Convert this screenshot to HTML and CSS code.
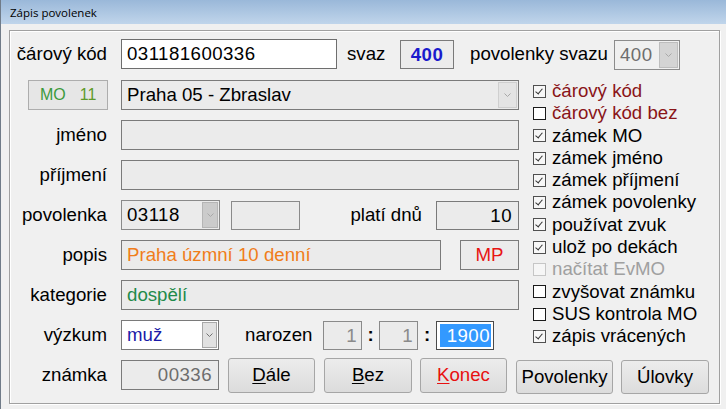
FILE: index.html
```html
<!DOCTYPE html>
<html lang="cs">
<head>
<meta charset="utf-8">
<title>Zápis povolenek</title>
<link rel="stylesheet" href="styles.css">
</head>
<body>
<div class="window">
  <div class="titlebar">Zápis povolenek</div>
  <div class="client">
    <div class="group">
      <div class="row1">
        <span class="label">čárový kód</span>
        <div class="field white code num">031181600336</div>
        <span class="svaz-label">svaz</span>
        <div class="field svaz num">400</div>
        <span class="pv-label">povolenky svazu</span>
        <div class="combo pv">
          <span class="val grey num">400</span>
          <span class="btn"><svg width="7" height="4" viewBox="0 0 7 4"><path d="M0.5 0.5 L3.5 3.5 L6.5 0.5" stroke="#a8a8a8" fill="none"/></svg></span>
        </div>
      </div>

      <div class="middle">
        <div class="form">
          <div class="mo-cell"><div class="mo"><span class="mo-a">MO</span><span class="mo-b">11</span></div></div>
          <div class="combo praha">
            <span class="val">Praha 05 - Zbraslav</span>
            <span class="btn"><svg width="7" height="4" viewBox="0 0 7 4"><path d="M0.5 0.5 L3.5 3.5 L6.5 0.5" stroke="#a8a8a8" fill="none"/></svg></span>
          </div>

          <span class="label">jméno</span>
          <div class="field dis"></div>

          <span class="label">příjmení</span>
          <div class="field dis"></div>

          <span class="label">povolenka</span>
          <div class="line">
            <div class="combo pl">
              <span class="val num">03118</span>
              <span class="btn"><svg width="7" height="4" viewBox="0 0 7 4"><path d="M0.5 0.5 L3.5 3.5 L6.5 0.5" stroke="#a8a8a8" fill="none"/></svg></span>
            </div>
            <div class="field dis small2"></div>
            <span class="spacer"></span>
            <span class="plati">platí dnů</span>
            <div class="field dis days num">10</div>
          </div>

          <span class="label">popis</span>
          <div class="line">
            <div class="field dis popis">Praha úzmní 10 denní</div>
            <div class="field dis mp">MP</div>
          </div>

          <span class="label">kategorie</span>
          <div class="field dis kat">dospělí</div>

          <span class="label">výzkum</span>
          <div class="line">
            <div class="combo vy">
              <span class="val blue">muž</span>
              <span class="btn"><svg width="7" height="4" viewBox="0 0 7 4"><path d="M0.5 0.5 L3.5 3.5 L6.5 0.5" stroke="#707070" fill="none"/></svg></span>
            </div>
            <span class="narozen">narozen</span>
            <div class="field dis day num">1</div>
            <span class="colon c1">:</span>
            <div class="field dis day num">1</div>
            <span class="colon c2">:</span>
            <div class="field year num"><span class="sel">1900</span></div>
          </div>
        </div>

        <ul class="checks">
          <li class="red"><span class="cb on"></span>čárový kód</li>
          <li class="red"><span class="cb off"></span>čárový kód bez</li>
          <li><span class="cb on"></span>zámek MO</li>
          <li><span class="cb on"></span>zámek jméno</li>
          <li><span class="cb on"></span>zámek příjmení</li>
          <li><span class="cb on"></span>zámek povolenky</li>
          <li><span class="cb on"></span>používat zvuk</li>
          <li><span class="cb on"></span>ulož po dekách</li>
          <li class="disabled"><span class="cb dis"></span>načítat EvMO</li>
          <li><span class="cb off"></span>zvyšovat známku</li>
          <li><span class="cb off"></span>SUS kontrola MO</li>
          <li><span class="cb on"></span>zápis vrácených</li>
        </ul>
      </div>

      <div class="bottom">
        <span class="label">známka</span>
        <div class="field dis znamka num">00336</div>
        <button class="b b-dale"><u>D</u>ále</button>
        <button class="b b-bez"><u>B</u>ez</button>
        <button class="b b-konec"><u>K</u>onec</button>
        <button class="b b-pov">Povolenky</button>
        <button class="b b-ul">Úlovky</button>
      </div>
    </div>
  </div>
</div>
</body>
</html>
```

FILE: styles.css
```css
* { box-sizing: border-box; }
html, body { margin: 0; padding: 0; }
body {
  width: 726px;
  height: 409px;
  overflow: hidden;
  background: #f0f0f0;
  font-family: "Liberation Sans", Arial, sans-serif;
  font-size: 18.67px;
  color: #000;
}
.window {
  height: 409px;
  border-left: 1px solid #707b88;
  display: flex;
  flex-direction: column;
}
.titlebar {
  height: 24px;
  flex: none;
  background: linear-gradient(#9ab8d9, #c0d5eb);
  font-family: "Open Sans", "Noto Sans", sans-serif;
  font-size: 11.5px;
  line-height: 25px;
  padding-left: 9px;
  color: #000;
}
.client {
  flex: 1;
  background: #f0f0f0;
  padding: 6px 0 0 8px;
}
.group {
  width: 711px;
  height: 374px;
  border: 1px solid #a0a0a0;
  box-shadow: inset 1px 1px 0 #fff, 1px 1px 0 #fff;
  padding-top: 8px;
}

/* generic */
.label {
  width: 98px;
  padding-right: 1px;
  text-align: right;
  white-space: nowrap;
  line-height: 30px;
}
.field {
  height: 30px;
  border: 1px solid #7a7a7a;
  background: #ebebeb;
  line-height: 28px;
  padding: 0 5px;
  white-space: nowrap;
  overflow: hidden;
}
.field.white { background: #fff; }
.num { letter-spacing: 0.45px; }

.combo {
  height: 30px;
  border: 1px solid #7a7a7a;
  background: #ebebeb;
  display: flex;
  align-items: stretch;
  padding: 1px;
}
.combo .val {
  flex: 1;
  line-height: 26px;
  padding-left: 4px;
  white-space: nowrap;
  overflow: hidden;
}
.combo .btn {
  width: 17px;
  flex: none;
  display: flex;
  align-items: center;
  justify-content: center;
  background: #d6d6d6;
  border: 1px solid #c2c2c2;
}

/* row 1 */
.row1 {
  display: flex;
  align-items: center;
  height: 30px;
}
.row1 .label { margin-right: 13px; }
.code { width: 216px; border-color: #6e6e6e; }
.svaz-label { width: 63px; padding-left: 10px; }
.svaz {
  width: 54px;
  height: 29px;
  background: #ececec;
  text-align: center;
  color: #1a1acc;
  font-weight: bold;
  line-height: 27px;
}
.pv-label { width: 160px; padding-left: 16px; white-space: nowrap; }
.pv { width: 66px; margin-top: 2px; border-color: #8c8c8c; background: #f0f0f0; }
.pv .btn { width: 19px; background: #d4d4d4; border-color: #bdbdbd; }
.grey { color: #6d6d6d; }

/* middle */
.middle {
  display: flex;
  margin-top: 11px;
}
.form {
  display: grid;
  grid-template-columns: 98px 398px;
  grid-auto-rows: 30px;
  column-gap: 13px;
  row-gap: 10px;
  width: 509px;
}
.mo-cell { display: flex; justify-content: flex-end; }
.mo {
  width: 80px;
  height: 30px;
  border: 1px solid #adadad;
  background: #e6e6e6;
  font-size: 16px;
  line-height: 28px;
  padding-left: 11px;
}
.mo-a { color: #3c9a3c; }
.mo-b { color: #5f9a2a; margin-left: 14px; }
.praha { background: #ebebeb; }
.praha .btn { width: 19px; background: #e4e4e4; border-color: #cfcfcf; }

.line {
  display: flex;
  align-items: center;
  height: 30px;
}
.pl { width: 99px; border-color: #8a8a8a; }
.pl .btn { width: 16px; background: #cbcbcb; border-color: #b5b5b5; }
.small2 { width: 69px; height: 29px; margin-left: 11px; border-color: #8a8a8a; }
.spacer { flex: 1; }
.plati { margin-right: 14px; white-space: nowrap; }
.days { width: 83px; height: 29px; text-align: right; padding-right: 6px; }

.popis { width: 320px; color: #f07d1a; }
.mp { width: 59px; margin-left: 19px; text-align: center; color: #e81414; padding: 0; }
.kat { color: #1e8a4a; }

.vy { width: 98px; background: #fff; border-color: #7a7a7a; }
.vy .btn { width: 15px; background: #e1e1e1; border-color: #a8a8a8; }
.blue { color: #1a1aa8; }
.narozen { margin-left: 26px; width: 78px; }
.day {
  width: 39px;
  height: 29px;
  color: #8a8a8a;
  text-align: right;
  padding-right: 4px;
  border-color: #8a8a8a;
}
.colon { font-weight: bold; text-align: center; }
.c1 { width: 17px; }
.c2 { width: 18px; }
.year {
  width: 58px;
  height: 29px;
  background: #fff;
  border: 1px solid #4a4a4a;
  padding: 2px 2px 2px 3px;
  line-height: 23px;
}
.sel {
  display: block;
  height: 23px;
  background: #3399ff;
  color: #fff;
  text-align: right;
  padding-right: 1px;
}

/* checkboxes */
.checks {
  list-style: none;
  margin: 0 0 0 14px;
  padding: 0;
}
.checks li {
  height: 22.3px;
  line-height: 22.3px;
  display: flex;
  align-items: center;
  white-space: nowrap;
}
.checks li.red { color: #8a1518; }
.checks li.disabled { color: #a0a0a0; }
.cb {
  width: 13px;
  height: 13px;
  margin-right: 6px;
  flex: none;
  position: relative;
}
.cb.off { border: 1.5px solid #1a1a1a; background: #fff; }
.cb.dis { border: 1px solid #c6c6c6; background: #f6f6f6; }
.cb.on { border: 1px solid #505050; background: #f7f7f7; }
.cb.on::after {
  content: "";
  position: absolute;
  left: 3px;
  top: 1px;
  width: 3px;
  height: 6px;
  border-right: 1.2px solid #333;
  border-bottom: 1.2px solid #333;
  transform: rotate(40deg);
}

/* bottom */
.bottom {
  display: flex;
  align-items: center;
  margin-top: 7px;
  height: 36px;
}
.bottom .label { margin-right: 13px; }
.znamka {
  width: 98px;
  color: #6d6d6d;
  text-align: right;
  padding-right: 6px;
}
.b {
  font-family: "Liberation Sans", Arial, sans-serif;
  font-size: 18.67px;
  color: #000;
  height: 35px;
  border: 1px solid #a6a6a6;
  border-radius: 3px;
  background: linear-gradient(#ececec, #dcdcdc);
  padding: 0;
  margin-left: 9px;
}
.b-dale { width: 87px; }
.b-bez { width: 88px; }
.b-konec { width: 87px; margin-left: 8px; color: #e81010; }
.b-pov { width: 97px; height: 34px; margin-top: 4px; }
.b-ul { width: 88px; height: 34px; margin-top: 4px; margin-left: 8px; }
u { text-underline-offset: 2px; }
```
